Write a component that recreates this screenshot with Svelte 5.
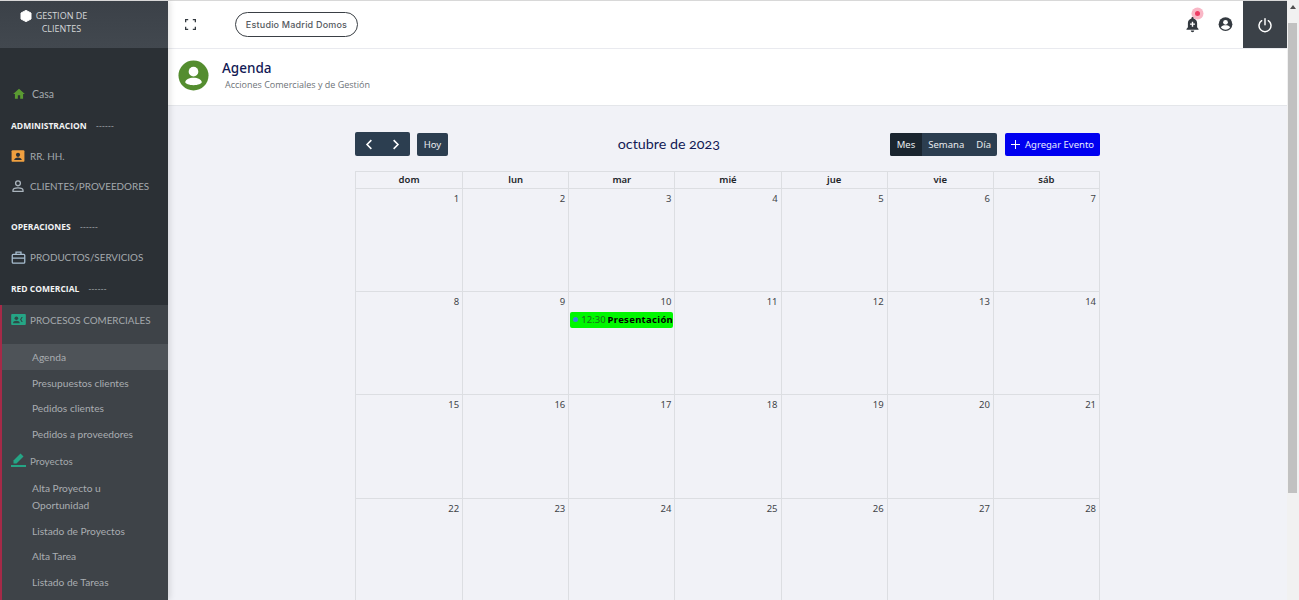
<script>
  const weeks = [
    [1, 2, 3, 4, 5, 6, 7],
    [8, 9, 10, 11, 12, 13, 14],
    [15, 16, 17, 18, 19, 20, 21],
    [22, 23, 24, 25, 26, 27, 28]
  ]
  const days = ['dom', 'lun', 'mar', 'mié', 'jue', 'vie', 'sáb']
</script>

<div class="shell">
  <div class="page">
    <aside class="sidebar">
      <div class="brand">
        <svg class="hex" viewBox="0 0 12 12" width="12" height="12"><path d="M6 .4 11 3v6L6 11.6 1 9V3z" fill="#fff" stroke="#fff" stroke-linejoin="round" /></svg>
        <span>GESTION DE<br />CLIENTES</span>
      </div>

      <nav class="nav">
        <a class="home">
          <svg viewBox="0 0 24 24" width="14" height="14"><path d="M10 20v-6h4v6h5v-8h3L12 3 2 12h3v8z" fill="#5a9a32" /></svg>
          <span>Casa</span>
        </a>
        <div class="section">ADMINISTRACION <i>------</i></div>
        <a class="item rrhh">
          <svg viewBox="0 0 24 24" width="14" height="14"><rect x="1" y="2" width="22" height="20" rx="2" fill="#f0a040" /><circle cx="12" cy="10" r="3.6" fill="#2b3035" /><path d="M5.5 19c0-3.2 3.2-4.6 6.5-4.6s6.5 1.4 6.5 4.6z" fill="#2b3035" /></svg>
          <span>RR. HH.</span>
        </a>
        <a class="item clients">
          <svg viewBox="0 0 24 24" width="16" height="16" fill="none" stroke="#aab4bd" stroke-width="2"><circle cx="12" cy="8" r="3.6" /><path d="M4.5 20v-1.5c0-2.5 4-3.7 7.5-3.7s7.5 1.2 7.5 3.7V20z" /></svg>
          <span>CLIENTES/PROVEEDORES</span>
        </a>
        <div class="section ops">OPERACIONES <i>------</i></div>
        <a class="item products">
          <svg viewBox="0 0 24 24" width="15" height="15" fill="none" stroke="#a9bfd2" stroke-width="2"><rect x="2" y="7" width="20" height="14" rx="1.5" /><path d="M8 7V3.5h8V7M2 13h20" /></svg>
          <span>PRODUCTOS/SERVICIOS</span>
        </a>
        <div class="section red">RED COMERCIAL <i>------</i></div>

        <div class="group">
          <a class="item procs">
            <svg viewBox="0 0 24 18" width="15" height="11"><rect width="24" height="18" rx="1.5" fill="#25a585" /><circle cx="8.5" cy="7" r="3" fill="#2f4a48" /><path d="M3 15c0-2.8 2.7-4 5.5-4s5.5 1.2 5.5 4z" fill="#2f4a48" /><path d="M17 5l-2.5 4 2.5 4h2l-2.5-4L19 5z" fill="#2f4a48" /></svg>
            <span>PROCESOS COMERCIALES</span>
          </a>
          <a class="sub active">Agenda</a>
          <a class="sub">Presupuestos clientes</a>
          <a class="sub">Pedidos clientes</a>
          <a class="sub">Pedidos a proveedores</a>
          <a class="item proj">
            <svg viewBox="0 0 15 15" width="15" height="15"><path d="M2.5 8.5 9.5 1.5 12.5 4.5 5.5 11.5H2.5z" fill="#25a585" /><rect y="13" width="15" height="2" fill="#25a585" /></svg>
            <span>Proyectos</span>
          </a>
          <a class="sub two">Alta Proyecto u<br />Oportunidad</a>
          <a class="sub">Listado de Proyectos</a>
          <a class="sub">Alta Tarea</a>
          <a class="sub">Listado de Tareas</a>
        </div>
      </nav>
    </aside>

    <div class="main">
      <header class="topbar">
        <svg class="expand" viewBox="0 0 12 12" width="11" height="11" fill="none" stroke="#343a40" stroke-width="1.4"><path d="M.7 3.5V.7h2.8M8.5.7h2.8v2.8M11.3 8.5v2.8H8.5M3.5 11.3H.7V8.5" /></svg>
        <div class="pill">Estudio Madrid Domos</div>
        <div class="spacer"></div>
        <div class="bell">
          <span class="ping"></span>
          <svg viewBox="0 0 24 24" width="17" height="17"><path d="M12 1.5c-.9 0-1.500.6-1.500 1.500v.6C7.300 4.400 5.500 7 5.500 10v6l-2 2.200V19.500h17v-1.300l-2-2.200v-6c0-3-1.800-5.600-5-6.400V3c0-.9-.6-1.500-1.500-1.500z" fill="#343a40" /><path d="M9.500 20.500a2.500 2.500 0 0 0 5 0z" fill="#343a40" /><path d="M12 8v7M8.500 11.500h7" stroke="#fff" stroke-width="2" /></svg>
        </div>
        <svg class="user" viewBox="0 0 24 24" width="15" height="15"><circle cx="12" cy="11.500" r="11" fill="#343a40" /><circle cx="12" cy="8.500" r="3.800" fill="#fff" /><path d="M4.500 16.500c1-2.600 4-3.500 7.500-3.500s6.500.9 7.500 3.500c-1.700 2.400-4.400 3.800-7.500 3.800s-5.800-1.400-7.500-3.800z" fill="#fff" /></svg>
        <div class="power">
          <svg viewBox="0 0 24 24" width="16" height="16" fill="none" stroke="#fff" stroke-width="2.2" stroke-linecap="round"><path d="M12 2.5v9" /><path d="M7 5.5a9 9 0 1 0 10 0" /></svg>
        </div>
      </header>

      <section class="title">
        <div class="avatar">
          <svg viewBox="0 0 32 32" width="31" height="31"><circle cx="16" cy="16" r="15.5" fill="#548d2f" /><circle cx="16" cy="12" r="5" fill="#fff" /><path d="M7.5 23c0-3 4-4.800 8.500-4.800s8.500 1.800 8.500 4.800c0 1.500-4 3-8.500 3s-8.500-1.500-8.500-3z" fill="#fff" /></svg>
        </div>
        <div>
          <h1>Agenda</h1>
          <p>Acciones Comerciales y de Gestión</p>
        </div>
      </section>

      <section class="content">
        <div class="calendar">
          <div class="toolbar">
            <div class="left">
              <div class="btn arrows">
                <svg viewBox="0 0 10 14" width="8" height="11" fill="none" stroke="#fff" stroke-width="2"><path d="M8 1.5 2.5 7 8 12.5" /></svg>
                <svg viewBox="0 0 10 14" width="8" height="11" fill="none" stroke="#fff" stroke-width="2"><path d="M2 1.5 7.5 7 2 12.5" /></svg>
              </div>
              <div class="btn today">Hoy</div>
            </div>
            <h2>octubre de 2023</h2>
            <div class="right">
              <div class="views">
                <span class="on">Mes</span>
                <span>Semana</span>
                <span>Día</span>
              </div>
              <div class="add">
                <svg viewBox="0 0 10 10" width="9" height="9" stroke="#fff" stroke-width="1.1"><path d="M5 0v10M0 5h10" /></svg>
                Agregar Evento
              </div>
            </div>
          </div>

          <div class="grid head">
            {#each days as d}
              <div class="dow">{d}</div>
            {/each}
          </div>
          {#each weeks as week}
            <div class="grid week">
              {#each week as n}
                <div class="cell">
                  <div class="num">{n}</div>
                  {#if n === 10}
                    <div class="event">
                      <span class="dot"></span>
                      <span class="time">12:30</span>
                      <b>Presentación de proyecto</b>
                    </div>
                  {/if}
                </div>
              {/each}
            </div>
          {/each}
        </div>
      </section>
    </div>
  </div>

  <div class="scrollbar">
    <span class="up"></span>
    <span class="thumb"></span>
  </div>
</div>

<style>
  :global(body) {
    margin: 0;
    overflow: hidden;
    background: #f1f2f7;
  }

  .shell {
    display: flex;
    height: 600px;
    overflow: hidden;
    font-family: 'Noto Sans', sans-serif;
  }

  .page {
    flex: 1;
    min-width: 0;
    display: flex;
  }

  .sidebar {
    flex: 0 0 168px;
    background: #2b3035;
    color: #a4a9ad;
    box-shadow: 2px 0 6px rgba(0, 0, 0, 0.12);
    z-index: 2;
    font-family: Lato, sans-serif;
  }

  .brand {
    height: 48px;
    box-sizing: border-box;
    background: linear-gradient(#3b4148, #42484f);
    border-top: 1px solid #d8d8d8;
    display: flex;
    justify-content: center;
    padding: 8px 61px 0 0;
    gap: 4px;
    color: #d6d8da;
    font-size: 9px;
    line-height: 13px;
    text-align: center;
    font-family: 'Open Sans', sans-serif;
  }

  .hex {
    margin-top: 1px;
  }

  .nav {
    padding-top: 37px;
    display: flex;
    flex-direction: column;
  }

  .nav a {
    display: flex;
    align-items: center;
  }

  .home {
    height: 18px;
    padding-left: 12px;
    gap: 6px;
    font-size: 10.5px;
  }

  .section {
    margin-top: 16px;
    padding-left: 11px;
    height: 13px;
    line-height: 13px;
    color: #f2f3f4;
    font-size: 8.5px;
    font-weight: 700;
    font-family: 'Open Sans', sans-serif;
  }

  .section i {
    font-style: normal;
    font-weight: 400;
    color: #a4a9ad;
    margin-left: 7px;
    letter-spacing: 0.3px;
  }

  .section.ops {
    margin-top: 25px;
  }

  .section.red {
    margin-top: 16px;
  }

  .item {
    font-size: 9.85px;
    padding-left: 11px;
    gap: 4px;
  }

  .rrhh {
    height: 18px;
    margin-top: 15px;
    gap: 5px;
  }

  .clients {
    height: 18px;
    margin-top: 12px;
  }

  .clients svg {
    margin-left: -1px;
  }

  .products {
    height: 18px;
    margin-top: 15px;
  }

  .group {
    margin-top: 10px;
    background: #3e4348;
    border-left: 2px solid #a52a48;
    display: flex;
    flex-direction: column;
    padding-bottom: 40px;
  }

  .group .item {
    padding-left: 9px;
  }

  .procs {
    height: 39px;
    padding-bottom: 10px;
    box-sizing: border-box;
  }

  .proj {
    height: 26px;
    margin: 1px 0 2px;
  }

  .proj svg {
    margin-top: -2px;
  }

  .sub {
    height: 25.7px;
    padding-left: 30px;
    font-size: 10.2px;
    color: #a9adb1;
  }

  .sub.two {
    height: 42px;
    line-height: 16.5px;
  }

  .sub.active {
    background: #4e5358;
  }

  .main {
    flex: 1;
    min-width: 0;
    display: flex;
    flex-direction: column;
  }

  .topbar {
    height: 48px;
    box-sizing: border-box;
    border-top: 1px solid #d8d8d8;
    background: #fff;
    display: flex;
    align-items: center;
    padding-left: 17px;
    box-shadow: 0 1px 2px rgba(0, 0, 0, 0.05);
  }

  .pill {
    margin-left: 39px;
    width: 123px;
    height: 25px;
    box-sizing: border-box;
    border: 1.5px solid #3a3f45;
    border-radius: 13px;
    display: flex;
    align-items: center;
    justify-content: center;
    font-size: 9px;
    letter-spacing: 0.2px;
    color: #555a60;
    font-family: Inter, sans-serif;
    font-weight: 500;
  }

  .spacer {
    flex: 1;
  }

  .bell {
    position: relative;
    width: 17px;
    height: 17px;
    margin-right: 17px;
  }

  .ping {
    position: absolute;
    top: -5px;
    left: 11px;
    width: 5px;
    height: 5px;
    border-radius: 50%;
    background: #ee3c64;
    box-shadow: 0 0 0 3.5px #f9b7c6;
  }

  .bell svg {
    position: relative;
  }

  .user {
    margin-right: 10px;
  }

  .power {
    width: 44px;
    height: 47px;
    background: #3b4148;
    display: flex;
    align-items: center;
    justify-content: center;
  }

  .title {
    height: 57px;
    box-sizing: border-box;
    margin-top: 1px;
    background: #fff;
    border-bottom: 1px solid #e4e6ea;
    display: flex;
    align-items: center;
    gap: 13px;
    padding: 0 0 3px 10px;
  }

  .title h1 {
    margin: -1px 0 0;
    font-size: 13.5px;
    line-height: 18px;
    font-weight: 500;
    color: #131a55;
    font-family: 'Noto Sans', sans-serif;
  }

  .title p {
    margin: 2px 0 0 3px;
    font-size: 9px;
    line-height: 12px;
    color: #6e7378;
    font-family: 'Open Sans', sans-serif;
  }

  .avatar {
    height: 31px;
  }

  .content {
    flex: 1;
    min-height: 0;
    overflow: hidden;
    background: #f1f2f7;
    padding: 26px 0 0 187px;
  }

  .calendar {
    width: 745px;
  }

  .toolbar {
    display: flex;
    justify-content: space-between;
    align-items: center;
    height: 24px;
    margin-bottom: 15px;
  }

  .left,
  .right {
    display: flex;
    align-items: center;
    gap: 7px;
  }

  .right {
    gap: 8px;
  }

  .btn {
    height: 23px;
    box-sizing: border-box;
    background: #2c3e50;
    border-radius: 2px;
    color: #e8ebee;
    display: flex;
    align-items: center;
    justify-content: center;
    font-size: 9.5px;
  }

  .arrows {
    width: 55px;
    height: 24px;
    gap: 19px;
  }

  .today {
    width: 31px;
  }

  h2 {
    margin: 0 0 1px;
    font-size: 14.3px;
    font-weight: 400;
    color: #131a55;
    font-family: Lato, sans-serif;
    font-variant-numeric: oldstyle-nums;
  }

  .views {
    display: flex;
    height: 23px;
    border-radius: 2px;
    overflow: hidden;
    background: #2c3e50;
    color: #e8ebee;
    font-size: 9.5px;
    line-height: 23px;
  }

  .views span {
    padding: 0 6px;
  }

  .views .on {
    background: #1a252f;
    padding: 0 7px;
  }

  .add {
    width: 95px;
    height: 23px;
    box-sizing: border-box;
    background: #0000f0;
    border-radius: 2px;
    color: #e8ebff;
    display: flex;
    align-items: center;
    gap: 5px;
    padding-left: 6px;
    font-size: 9.5px;
    white-space: nowrap;
  }

  .grid {
    display: grid;
    grid-template-columns: repeat(7, 1fr);
    border-left: 1px solid #dcdee2;
    border-right: 1px solid #dcdee2;
    border-bottom: 1px solid #dcdee2;
  }

  .head {
    border-top: 1px solid #dcdee2;
  }

  .dow {
    height: 15.6px;
    line-height: 15px;
    text-align: center;
    font-size: 9.5px;
    font-weight: 600;
    color: #212529;
  }

  .dow + .dow,
  .cell + .cell {
    border-left: 1px solid #dcdee2;
  }

  .week {
    height: 102.4px;
  }

  .cell {
    min-width: 0;
    overflow: hidden;
  }

  .num {
    text-align: right;
    font-size: 9.5px;
    line-height: 13px;
    padding: 3px 3px 0 0;
    color: #3f4448;
  }

  .event {
    margin: 4px 1px 0 1px;
    height: 16px;
    background: #00f700;
    border-radius: 2px;
    display: flex;
    align-items: center;
    font-size: 9.5px;
    white-space: nowrap;
    overflow: hidden;
    color: #1d6a1d;
  }

  .dot {
    flex: none;
    width: 5px;
    height: 5px;
    border-radius: 50%;
    background: #3788d8;
    margin: 0 3px 0 3px;
  }

  .event b {
    margin-left: 2px;
    color: #000;
    font-weight: 700;
    letter-spacing: 0.3px;
  }

  .scrollbar {
    flex: 0 0 12px;
    background: #f1f1f1;
    position: relative;
  }

  .up {
    position: absolute;
    top: 5px;
    left: 3px;
    border: 3px solid transparent;
    border-top: 0;
    border-bottom: 4px solid #505050;
  }

  .thumb {
    position: absolute;
    top: 23px;
    left: 1px;
    right: 2px;
    height: 470px;
    background: #c1c1c1;
  }
</style>
